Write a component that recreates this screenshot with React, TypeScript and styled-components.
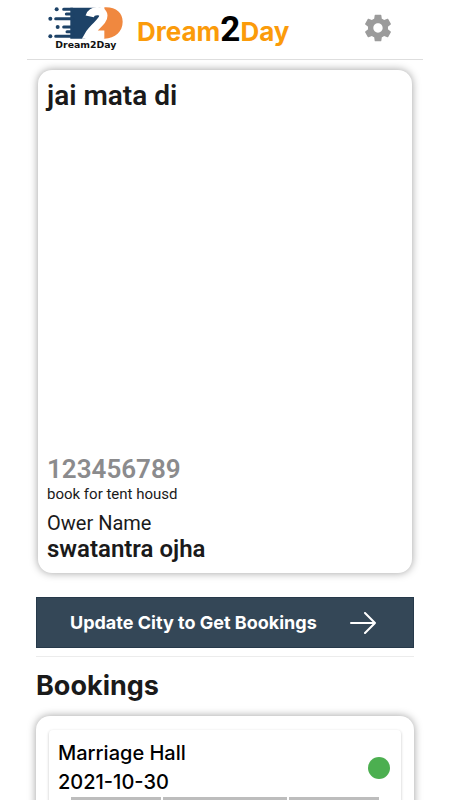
import React from "react";
import styled, { createGlobalStyle } from "styled-components";

const GlobalStyle = createGlobalStyle`
  *, *::before, *::after { box-sizing: border-box; }
  body { margin: 0; background: #fff; color: #1a1a1a; font-family: Roboto, "Liberation Sans", sans-serif; }
  h1, h2, p { margin: 0; }
`;

const geometric = `Inter, "Open Sans", sans-serif`;

const Page = styled.div`
  height: 100vh;
  overflow-y: auto;
  scrollbar-width: none;
  padding: 0 27px;
`;

const Header = styled.header`
  display: flex;
  align-items: center;
  height: 60px;
  padding: 0 29px 0 20px;
  border-bottom: 1px solid #dedede;
`;

const Logo = styled.svg`
  width: 78px;
  height: 46px;
  margin-bottom: 4px;
`;

const Brand = styled.h1`
  margin: 2px 0 0 12px;
  font-family: ${geometric};
  font-size: 26px;
  font-weight: 700;
  line-height: 40px;
  color: #fb9b0a;
`;

const BrandDigit = styled.span`
  font-family: Roboto, sans-serif;
  font-size: 35px;
  line-height: 40px;
  color: #000;
`;

const IconButton = styled.button`
  display: flex;
  margin: 0 0 4px auto;
  padding: 0;
  border: 0;
  background: none;
  color: #9b9b9b;
  cursor: pointer;
`;

const Main = styled.main`
  padding: 10px 9px 0;
`;

const Card = styled.section`
  border-radius: 14px;
  background: #fff;
  box-shadow: 0 0 8px rgba(0, 0, 0, 0.38);
`;

const ProfileCard = styled(Card)`
  display: flex;
  flex-direction: column;
  height: 503px;
  margin: 0 2px;
  padding: 8px 9px 10px;
`;

const ShopName = styled.h2`
  margin-bottom: auto;
  font-size: 28px;
  font-weight: 600;
  line-height: 36px;
`;

const Phone = styled.p`
  font-size: 26px;
  font-weight: 600;
  line-height: 32px;
  color: #8b8b8d;
`;

const Note = styled.p`
  margin-bottom: 8px;
  font-size: 15px;
  line-height: 18px;
`;

const OwnerLabel = styled.p`
  font-size: 20px;
  line-height: 24px;
`;

const OwnerName = styled.p`
  font-size: 24px;
  font-weight: 600;
  line-height: 28px;
`;

const UpdateButton = styled.button`
  display: flex;
  align-items: center;
  width: 100%;
  height: 51px;
  margin-top: 24px;
  padding: 0 37px 0 33px;
  justify-content: space-between;
  border: 1px solid #26394a;
  border-radius: 0;
  background: #344757;
  color: #fff;
  font-family: ${geometric};
  font-size: 18px;
  font-weight: 700;
  cursor: pointer;
`;

const Divider = styled.hr`
  height: 1px;
  margin: 8px 0 10px;
  border: 0;
  background: #ececec;
`;

const SectionTitle = styled.h2`
  font-family: ${geometric};
  font-size: 27px;
  font-weight: 700;
  line-height: 38px;
`;

const BookingsCard = styled(Card)`
  margin-top: 11px;
  padding: 14px 13px;
`;

const Booking = styled.article`
  padding: 9px 9px;
  border-radius: 4px;
  box-shadow: 0 1px 3px rgba(0, 0, 0, 0.24);
`;

const BookingHead = styled.div`
  display: flex;
  align-items: center;
  justify-content: space-between;
  padding-right: 2px;
  font-family: ${geometric};
  font-size: 20px;
  font-weight: 500;
  line-height: 29px;
  color: #000;
`;

const Status = styled.span`
  width: 22px;
  height: 22px;
  border-radius: 50%;
  background: #4caf50;
`;

const Slots = styled.div`
  display: grid;
  grid-template-columns: 90fr 125fr 90fr;
  gap: 2px;
  margin: 0 13px;
`;

const Slot = styled.div`
  height: 40px;
  border-top: 3px solid #bdbdbd;
`;

function DreamLogo() {
  return (
    <Logo viewBox="58 12 234 138" role="img" aria-label="Dream2Day">
      <path d="M128 20H218V50L172 113H128Z" fill="#1d4267" />
      <g stroke="#1d4267" strokeWidth="9" strokeLinecap="round">
        <path d="M108 25H135M116 39H135M84 53H135M108 78H135M118 92H135M84 106H135" />
      </g>
      <g fill="#1d4267">
        <circle cx="87" cy="25" r="6" />
        <circle cx="68" cy="53" r="6" />
        <circle cx="90" cy="78" r="6" />
        <circle cx="68" cy="106" r="6" />
      </g>
      <path d="M230 19c34-2 55 16 55 43 0 29-22 50-55 51l-28-20 30-42Z" fill="#f0883f" />
      <path
        d="M186 46C190 27 226 24 227 44C228 62 198 76 184 101H230"
        fill="none"
        stroke="#fff"
        strokeWidth="25"
      />
      <text x="83" y="140" fill="#111" fontFamily="DejaVu Sans" fontSize="28" fontWeight="700">
        Dream2Day
      </text>
    </Logo>
  );
}

function GearIcon() {
  return (
    <svg width="32" height="32" viewBox="0 0 24 24" fill="currentColor" aria-hidden="true">
      <path d="M19.43 12.98c.04-.32.07-.64.07-.98s-.03-.66-.07-.98l2.11-1.65c.19-.15.24-.42.12-.64l-2-3.46c-.12-.22-.39-.3-.61-.22l-2.49 1c-.52-.4-1.08-.73-1.69-.98l-.38-2.65C14.46 2.18 14.25 2 14 2h-4c-.25 0-.46.18-.49.42l-.38 2.65c-.61.25-1.17.59-1.69.98l-2.49-1c-.23-.09-.49 0-.61.22l-2 3.46c-.13.22-.07.49.12.64l2.11 1.65c-.04.32-.07.65-.07.98s.03.66.07.98l-2.11 1.65c-.19.15-.24.42-.12.64l2 3.46c.12.22.39.3.61.22l2.49-1c.52.4 1.08.73 1.69.98l.38 2.65c.03.24.24.42.49.42h4c.25 0 .46-.18.49-.42l.38-2.65c.61-.25 1.17-.59 1.69-.98l2.49 1c.23.09.49 0 .61-.22l2-3.46c.12-.22.07-.49-.12-.64l-2.11-1.65zM12 15.5c-1.93 0-3.5-1.57-3.5-3.5s1.57-3.5 3.5-3.5 3.5 1.57 3.5 3.5-1.57 3.5-3.5 3.5z" />
    </svg>
  );
}

function ArrowIcon() {
  return (
    <svg width="26" height="22" viewBox="0 0 26 22" fill="none" stroke="#fff" strokeWidth="2" strokeLinecap="round" strokeLinejoin="round" aria-hidden="true">
      <path d="M1 11h24M15 1l10 10-10 10" />
    </svg>
  );
}

export default function App() {
  return (
    <Page>
      <GlobalStyle />
      <Header>
        <DreamLogo />
        <Brand>
          Dream<BrandDigit>2</BrandDigit>Day
        </Brand>
        <IconButton type="button" aria-label="Settings">
          <GearIcon />
        </IconButton>
      </Header>
      <Main>
        <ProfileCard>
          <ShopName>jai mata di</ShopName>
          <Phone>123456789</Phone>
          <Note>book for tent housd</Note>
          <OwnerLabel>Ower Name</OwnerLabel>
          <OwnerName>swatantra ojha</OwnerName>
        </ProfileCard>
        <UpdateButton type="button">
          Update City to Get Bookings
          <ArrowIcon />
        </UpdateButton>
        <Divider />
        <SectionTitle>Bookings</SectionTitle>
        <BookingsCard>
          <Booking>
            <BookingHead>
              <div>
                <p>Marriage Hall</p>
                <p>2021-10-30</p>
              </div>
              <Status role="img" aria-label="Active" />
            </BookingHead>
            <Slots>
              <Slot />
              <Slot />
              <Slot />
            </Slots>
          </Booking>
        </BookingsCard>
      </Main>
    </Page>
  );
}
